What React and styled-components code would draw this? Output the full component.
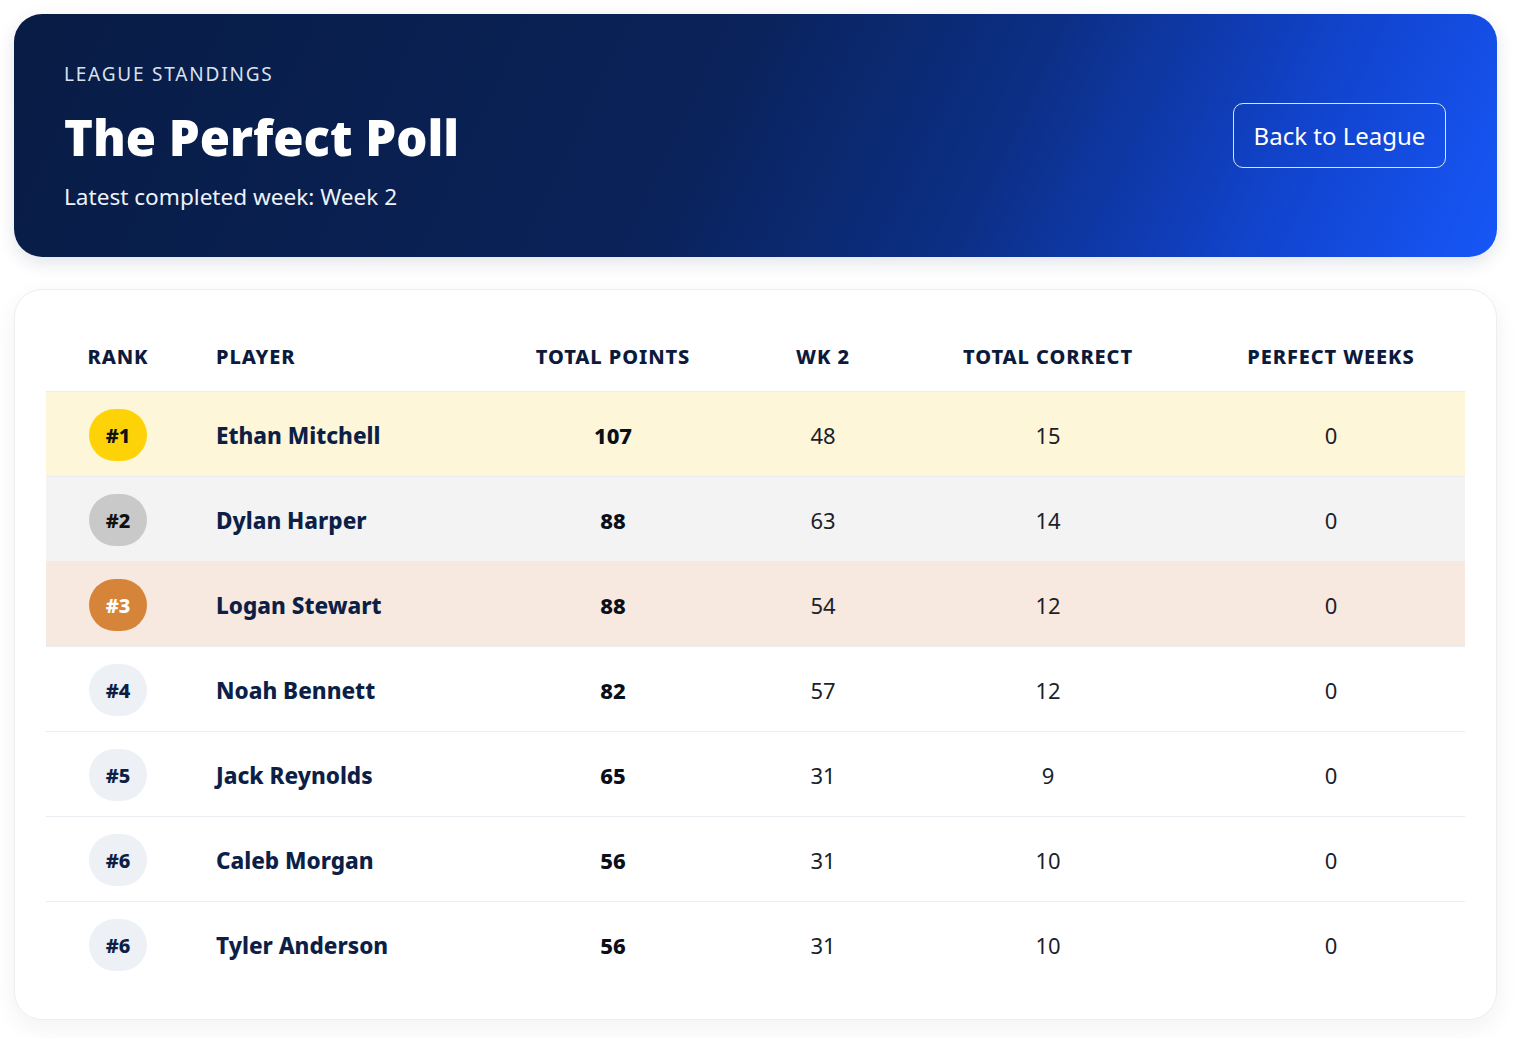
import React from 'react';
import styled, { createGlobalStyle } from 'styled-components';

const GlobalStyle = createGlobalStyle`
  html, body {
    margin: 0;
    padding: 0;
    background: #fff;
  }
  body {
    font-family: 'Noto Sans', 'Open Sans', sans-serif;
    color: #0f1d3d;
  }
`;

const players = [
  { rank: 1, name: 'Ethan Mitchell', points: 107, week: 48, correct: 15, perfect: 0 },
  { rank: 2, name: 'Dylan Harper', points: 88, week: 63, correct: 14, perfect: 0 },
  { rank: 3, name: 'Logan Stewart', points: 88, week: 54, correct: 12, perfect: 0 },
  { rank: 4, name: 'Noah Bennett', points: 82, week: 57, correct: 12, perfect: 0 },
  { rank: 5, name: 'Jack Reynolds', points: 65, week: 31, correct: 9, perfect: 0 },
  { rank: 6, name: 'Caleb Morgan', points: 56, week: 31, correct: 10, perfect: 0 },
  { rank: 6, name: 'Tyler Anderson', points: 56, week: 31, correct: 10, perfect: 0 },
];

// top three get tinted rows and medal badges
const rowColors = ['#fdf6d8', '#f3f3f3', '#f7e9df'];
const badgeColors = [
  { bg: '#fdd307', fg: '#111' },
  { bg: '#c9c9c9', fg: '#111' },
  { bg: '#d5843a', fg: '#fff' },
];

const Page = styled.div`
  display: flex;
  flex-direction: column;
  gap: 32px;
  padding: 14px 18px 20px 14px;
`;

const Hero = styled.header`
  display: flex;
  align-items: center;
  justify-content: space-between;
  height: 243px;
  box-sizing: border-box;
  padding: 0 51px 0 50px;
  border-radius: 28px;
  background: linear-gradient(115deg, #081c45 0%, #0a2258 45%, #0c2f86 66%, #1143cc 84%, #1757f8 100%);
  box-shadow: 0 6px 18px rgba(15, 30, 70, 0.12);
  color: #fff;
`;

const HeroText = styled.div`
  display: flex;
  flex-direction: column;
  padding-top: 2px;
`;

const Eyebrow = styled.div`
  font-size: 19px;
  letter-spacing: 1.8px;
  color: #dbe2ee;
  text-transform: uppercase;
`;

const Title = styled.h1`
  margin: 24px 0 16px;
  font-size: 49px;
  font-weight: 900;
  line-height: 1.1;
  color: #fff;
`;

const Subtitle = styled.div`
  font-size: 22.6px;
  color: #eef2fa;
`;

const BackButton = styled.button`
  width: 213px;
  height: 65px;
  border: 1.5px solid rgba(255, 255, 255, 0.85);
  border-radius: 10px;
  background: transparent;
  color: #fff;
  font-family: inherit;
  font-size: 24px;
  cursor: pointer;
`;

const Card = styled.section`
  padding: 32px 31px;
  border: 1px solid #eceef1;
  border-radius: 28px;
  background: #fff;
  box-shadow: 0 8px 24px rgba(20, 30, 60, 0.06);
`;

const Row = styled.div`
  display: grid;
  grid-template-columns: 144px 289px 268px 152px 298px 268px;
  align-items: center;
  box-sizing: border-box;
  height: ${p => (p.head ? '70px' : '85px')};
  padding-top: ${p => (p.head ? '0' : '2px')};
  background: ${p => p.bg || 'transparent'};
  border-bottom: 1px solid ${p => (p.last ? 'transparent' : '#e9ecf1')};
`;

const HeadCell = styled.div`
  font-size: 20px;
  font-weight: 800;
  letter-spacing: 0.9px;
  color: #0c1a3b;
  text-transform: uppercase;
  text-align: ${p => p.align || 'center'};
  padding-left: ${p => (p.align === 'left' ? '26px' : '0')};
`;

const Cell = styled.div`
  font-size: 22px;
  font-weight: ${p => (p.bold ? 800 : 400)};
  color: ${p => (p.bold ? '#0b0f1a' : '#1b1f2a')};
  text-align: center;
`;

const BadgeCell = styled.div`
  display: flex;
  justify-content: center;
`;

const Badge = styled.span`
  display: inline-flex;
  align-items: center;
  justify-content: center;
  width: 58px;
  height: 52px;
  border-radius: 26px;
  background: ${p => p.bg};
  color: ${p => p.fg};
  font-size: 20px;
  font-weight: 800;
`;

const Name = styled.div`
  padding-left: 26px;
  font-size: 22.5px;
  font-weight: 800;
  color: #0e1f47;
`;

export default function App() {
  return (
    <>
      <GlobalStyle />
      <Page>
        <Hero>
          <HeroText>
            <Eyebrow>League Standings</Eyebrow>
            <Title>The Perfect Poll</Title>
            <Subtitle>Latest completed week: Week 2</Subtitle>
          </HeroText>
          <BackButton>Back to League</BackButton>
        </Hero>

        <Card>
          <Row head>
            <HeadCell>Rank</HeadCell>
            <HeadCell align="left">Player</HeadCell>
            <HeadCell>Total Points</HeadCell>
            <HeadCell>Wk 2</HeadCell>
            <HeadCell>Total Correct</HeadCell>
            <HeadCell>Perfect Weeks</HeadCell>
          </Row>
          {players.map((p, i) => {
            const badge = badgeColors[i] || { bg: '#edf0f5', fg: '#0e1f47' };
            return (
              <Row key={i} bg={rowColors[i]} last={i === players.length - 1}>
                <BadgeCell>
                  <Badge bg={badge.bg} fg={badge.fg}>#{p.rank}</Badge>
                </BadgeCell>
                <Name>{p.name}</Name>
                <Cell bold>{p.points}</Cell>
                <Cell>{p.week}</Cell>
                <Cell>{p.correct}</Cell>
                <Cell>{p.perfect}</Cell>
              </Row>
            );
          })}
        </Card>
      </Page>
    </>
  );
}
